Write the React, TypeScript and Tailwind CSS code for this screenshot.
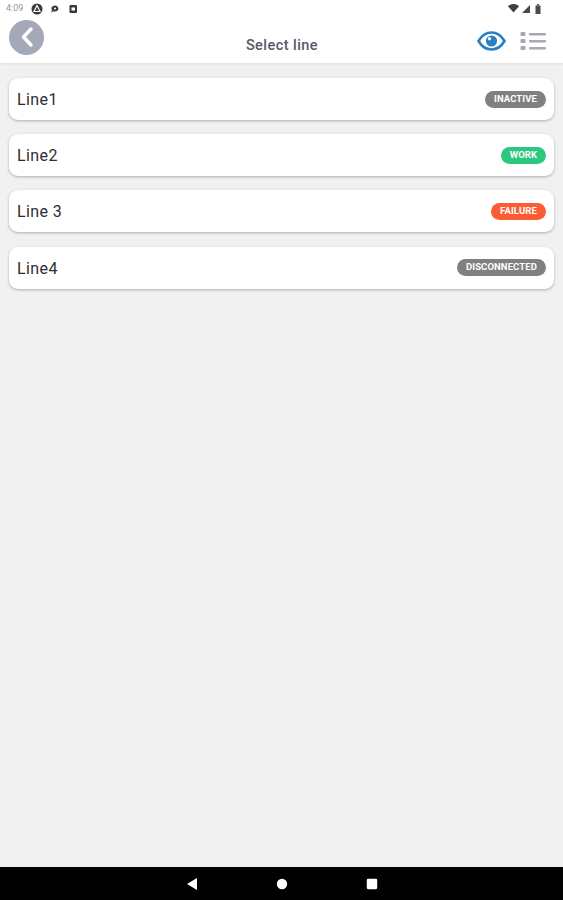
const font = { fontFamily: 'Roboto, sans-serif' };

type Row = { name: string; status: string; color: string; pad: string };

const rows: Row[] = [
  { name: 'Line1', status: 'INACTIVE', color: 'bg-[#808080]', pad: 'w-[61px]' },
  { name: 'Line2', status: 'WORK', color: 'bg-[#2ec77f]', pad: 'w-[45px]' },
  { name: 'Line 3', status: 'FAILURE', color: 'bg-[#fb5c33]', pad: 'w-[55px]' },
  { name: 'Line4', status: 'DISCONNECTED', color: 'bg-[#808080]', pad: 'w-[89px]' },
];

function StatusBar() {
  return (
    <div className="flex h-[17px] items-center justify-between pl-[6px] pr-[22px]">
      <div className="flex items-center">
        <span className="text-[9px] leading-none text-[#9a9a9a]">4:09</span>
        <svg width="12" height="12" viewBox="0 0 12 12" className="ml-[8px]">
          <circle cx="6" cy="6" r="5.5" fill="#3a3a3a" />
          <path d="M6 2.5 L9 8.5 H3 Z" fill="none" stroke="#fff" strokeWidth="1.2" />
        </svg>
        <svg width="10" height="10" viewBox="0 0 10 10" className="ml-[7px]">
          <path d="M5 1.5a3.5 3 0 1 1-1.6 5.7L1 8.5l1-2.3A3.5 3 0 0 1 5 1.5Z" fill="#3a3a3a" />
          <circle cx="5" cy="4.5" r="1" fill="#fff" />
        </svg>
        <svg width="9" height="10" viewBox="0 0 9 10" className="ml-[9px]">
          <rect x="0.5" y="1" width="7.5" height="8" rx="1" fill="#3a3a3a" />
          <rect x="2.5" y="3.5" width="3.5" height="3" fill="#fff" />
        </svg>
      </div>
      <div className="flex items-center gap-[3px]">
        <svg width="11" height="9" viewBox="0 0 11 9">
          <path d="M0 2.2 C3 -0.6 8 -0.6 11 2.2 L5.5 8.5 Z" fill="#3f3f3f" />
        </svg>
        <svg width="8" height="8" viewBox="0 0 8 8">
          <path d="M8 0 V8 H0 Z" fill="#4a4a4a" />
        </svg>
        <svg width="6" height="10" viewBox="0 0 6 10" className="ml-[2px]">
          <rect x="0.5" y="1.5" width="5" height="8.5" fill="#4a4a4a" />
          <rect x="2" y="0" width="2" height="1.5" fill="#4a4a4a" />
        </svg>
      </div>
    </div>
  );
}

function Header() {
  return (
    <div className="flex h-[47px] items-center justify-between border-b border-[#e6e6e6] bg-white pl-[9px] pr-[17px] shadow-[0_1px_2px_rgba(0,0,0,0.05)]">
      <div className="mb-[6px] flex h-[35px] w-[35px] items-center justify-center rounded-full bg-[#a5a8b6]">
        <svg width="14" height="22" viewBox="0 0 14 22" fill="none">
          <path d="M11 3 L3.5 11 L11 19" stroke="#fff" strokeWidth="3.4" strokeLinecap="round" strokeLinejoin="round" />
        </svg>
      </div>
      <span className="ml-[43px] mt-[11px] text-[14.5px] font-medium tracking-[0.45px] text-[#565a66]">Select line</span>
      <div className="mt-[1px] flex items-center gap-[14px]">
        <svg width="29" height="20" viewBox="0 0 29 20" fill="none">
          <path d="M1.5 10 C5 4 9.5 1.5 14.5 1.5 C19.5 1.5 24 4 27.5 10 C24 16 19.5 18.5 14.5 18.5 C9.5 18.5 5 16 1.5 10 Z" stroke="#2a7fc4" strokeWidth="2.6" />
          <circle cx="14.5" cy="10" r="5.6" fill="#2a7fc4" />
          <circle cx="12.5" cy="7.8" r="1.7" fill="#fff" />
        </svg>
        <svg width="26" height="20" viewBox="0 0 26 20" fill="#a5a8b6">
          <rect x="0.5" y="1" width="5" height="4" rx="1" />
          <rect x="0.5" y="8" width="5" height="4" rx="1" />
          <rect x="0.5" y="15" width="5" height="4" rx="1" />
          <rect x="9" y="2" width="17" height="2.4" rx="1" />
          <rect x="9" y="9" width="17" height="2.4" rx="1" />
          <rect x="9" y="16" width="17" height="2.4" rx="1" />
        </svg>
      </div>
    </div>
  );
}

function LineRow({ row }: { row: Row }) {
  return (
    <div className="flex h-[42px] items-center justify-between rounded-[9px] bg-white pl-[8px] pr-[8px] shadow-[0_1px_3px_rgba(0,0,0,0.28)]">
      <span className="mt-[2px] text-[16px] tracking-[0.4px] text-[#2e2e2e]">{row.name}</span>
      <span className={`flex h-[17px] ${row.pad} items-center justify-center rounded-full ${row.color} text-[9.5px] font-bold tracking-[0.1px] text-white`}>
        {row.status}
      </span>
    </div>
  );
}

export default function App() {
  return (
    <div className="flex h-[900px] w-[563px] flex-col overflow-hidden bg-[#f1f1f1]" style={font}>
      <div className="bg-white">
        <StatusBar />
        <Header />
      </div>
      <div className="flex flex-1 flex-col gap-[14.2px] px-[9px] pt-[14px]">
        {rows.map((row) => (
          <LineRow key={row.name} row={row} />
        ))}
      </div>
      <div className="flex h-[33px] items-center justify-center gap-[78px] bg-black">
        <svg width="12" height="14" viewBox="0 0 12 14"><path d="M11 1 V13 L1 7 Z" fill="#fff" /></svg>
        <svg width="12" height="12" viewBox="0 0 12 12"><circle cx="6" cy="6" r="5.2" fill="#fff" /></svg>
        <svg width="12" height="12" viewBox="0 0 12 12"><rect x="0.8" y="0.8" width="10.4" height="10.4" rx="1.4" fill="#fff" /></svg>
      </div>
    </div>
  );
}
